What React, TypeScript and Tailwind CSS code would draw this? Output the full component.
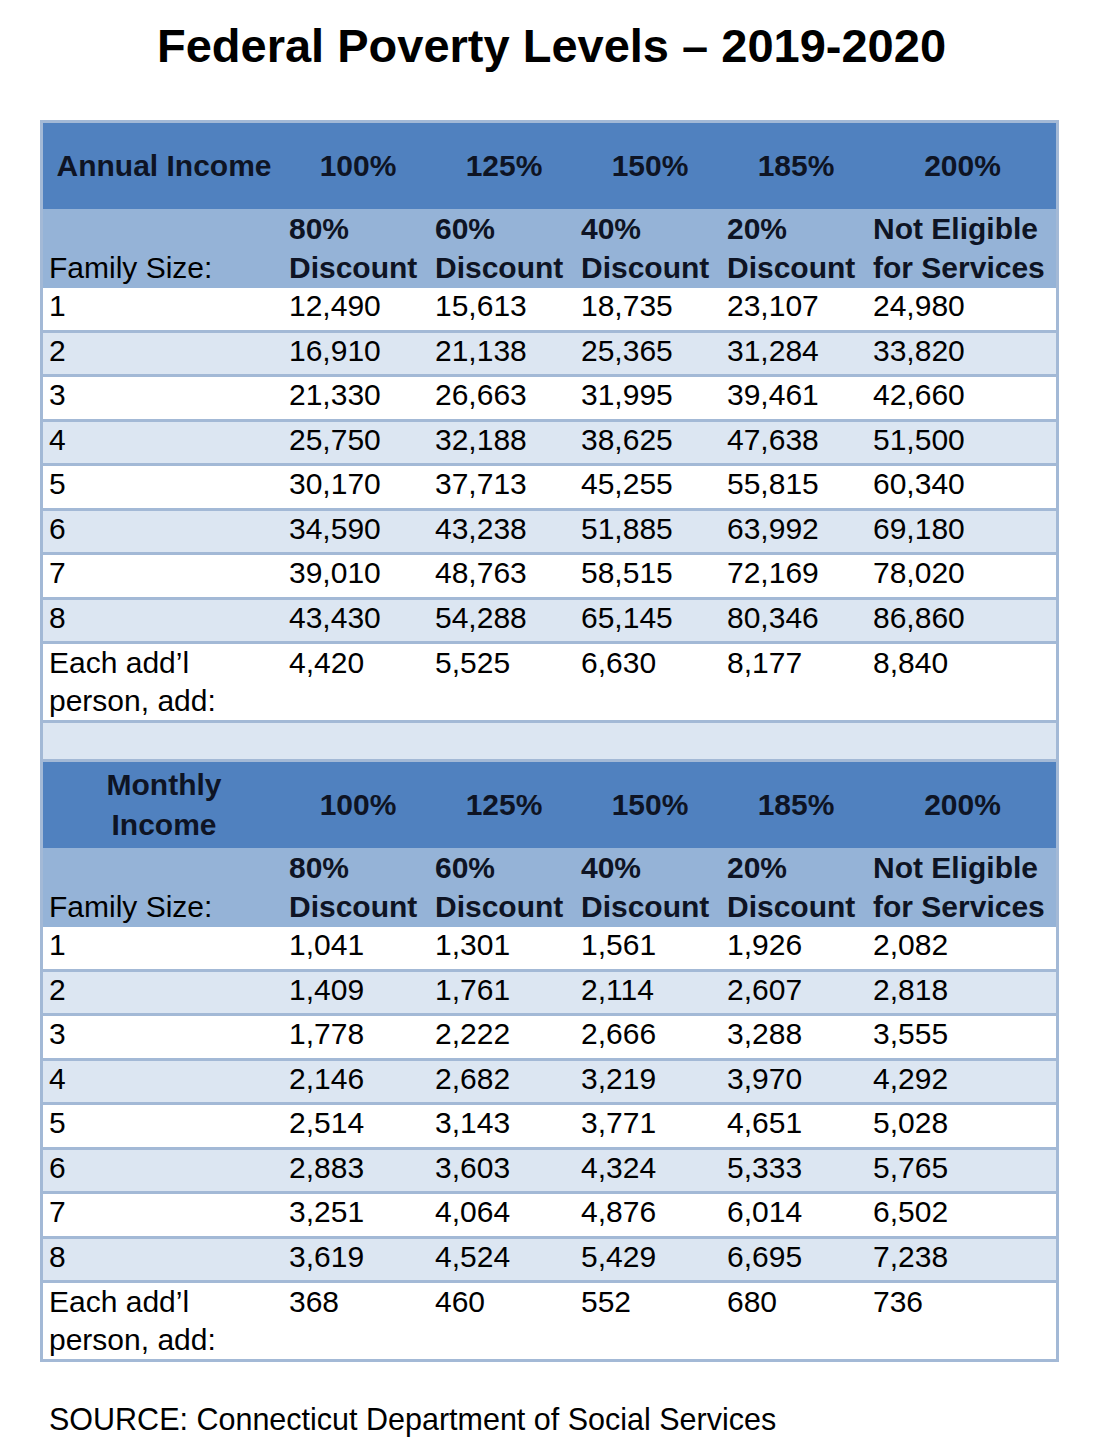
import React from "react";

const grid = "grid grid-cols-[242px_146px_146px_146px_146px_187px]";
const levels = ["100%", "125%", "150%", "185%", "200%"];
const discounts = [
  ["80%", "Discount"],
  ["60%", "Discount"],
  ["40%", "Discount"],
  ["20%", "Discount"],
  ["Not Eligible", "for Services"],
];

const annual = [
  ["12,490", "15,613", "18,735", "23,107", "24,980"],
  ["16,910", "21,138", "25,365", "31,284", "33,820"],
  ["21,330", "26,663", "31,995", "39,461", "42,660"],
  ["25,750", "32,188", "38,625", "47,638", "51,500"],
  ["30,170", "37,713", "45,255", "55,815", "60,340"],
  ["34,590", "43,238", "51,885", "63,992", "69,180"],
  ["39,010", "48,763", "58,515", "72,169", "78,020"],
  ["43,430", "54,288", "65,145", "80,346", "86,860"],
];
const annualAdd = ["4,420", "5,525", "6,630", "8,177", "8,840"];

const monthly = [
  ["1,041", "1,301", "1,561", "1,926", "2,082"],
  ["1,409", "1,761", "2,114", "2,607", "2,818"],
  ["1,778", "2,222", "2,666", "3,288", "3,555"],
  ["2,146", "2,682", "3,219", "3,970", "4,292"],
  ["2,514", "3,143", "3,771", "4,651", "5,028"],
  ["2,883", "3,603", "4,324", "5,333", "5,765"],
  ["3,251", "4,064", "4,876", "6,014", "6,502"],
  ["3,619", "4,524", "5,429", "6,695", "7,238"],
];
const monthlyAdd = ["368", "460", "552", "680", "736"];

function Section({ title, rows, add }: { title: React.ReactNode; rows: string[][]; add: string[] }) {
  return (
    <>
      <div className={`${grid} h-[86px] bg-[#5081bf] items-center font-bold text-[#0e1424]`}>
        <div className="text-center leading-[40px]">{title}</div>
        {levels.map((l) => (
          <div key={l} className="text-center leading-[40px]">{l}</div>
        ))}
      </div>
      <div className={`${grid} h-[79px] bg-[#95b3d7] items-end pb-[2px] leading-[39px] text-[#0e1424]`}>
        <div className="pl-[6px] text-black">Family Size:</div>
        {discounts.map((d, i) => (
          <div key={i} className="pl-[4px] font-bold whitespace-nowrap">
            {d[0]}
            <br />
            {d[1]}
          </div>
        ))}
      </div>
      {rows.map((r, i) => (
        <div
          key={i}
          className={`${grid} h-[44.5px] pt-[1px] leading-[34px] border-b-[3px] border-[#a3b9d6] ${
            i % 2 === 0 ? "bg-white" : "bg-[#dce6f2]"
          }`}
        >
          <div className="pl-[6px]">{i + 1}</div>
          {r.map((v, j) => (
            <div key={j} className="pl-[4px]">{v}</div>
          ))}
        </div>
      ))}
      <div className={`${grid} h-[76px] bg-white leading-[38px]`}>
        <div className="pl-[6px]">
          Each add’l
          <br />
          person, add:
        </div>
        {add.map((v, j) => (
          <div key={j} className="pl-[4px]">{v}</div>
        ))}
      </div>
    </>
  );
}

export default function App() {
  return (
    <div className="w-[1119px] h-[1448px] bg-white text-black font-['Liberation_Sans',Arial,sans-serif] text-[30px]">
      <h1 className="pt-[19px] pr-[16px] text-center text-[47px] leading-[54px] font-bold">
        Federal Poverty Levels – 2019-2020
      </h1>
      <div className="mt-[47px] ml-[40px] w-[1019px] border-[3px] border-[#a3b9d6]">
        <Section title="Annual Income" rows={annual} add={annualAdd} />
        <div className="h-[42px] bg-[#dce6f2] border-y-[3px] border-[#a3b9d6]" />
        <Section
          title={
            <>
              Monthly
              <br />
              Income
            </>
          }
          rows={monthly}
          add={monthlyAdd}
        />
      </div>
      <p className="mt-[40px] pl-[49px] text-[30.5px] leading-[34px]">
        SOURCE: Connecticut Department of Social Services
      </p>
    </div>
  );
}
